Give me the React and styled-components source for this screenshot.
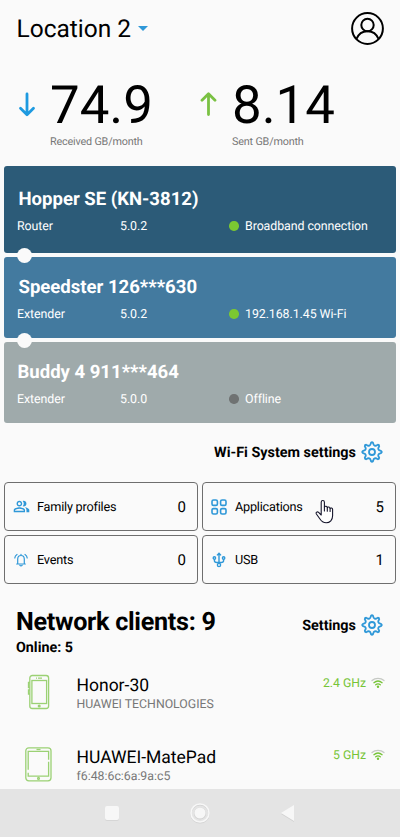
import React from 'react';
import styled, { createGlobalStyle } from 'styled-components';
import { MdOutlinePeopleAlt } from 'react-icons/md';

const GlobalStyle = createGlobalStyle`
  * {
    box-sizing: border-box;
  }
  body {
    margin: 0;
    background: #fafafa;
    color: #000;
    font-family: Roboto, "Liberation Sans", sans-serif;
    text-rendering: geometricPrecision;
    overflow: hidden;
  }
  svg {
    display: block;
    flex-shrink: 0;
  }
`;
const Screen = styled.div`
  display: flex;
  flex-direction: column;
  width: 400px;
  height: 837px;
  overflow: hidden;
`;
const Header = styled.header`
  display: flex;
  align-items: center;
  justify-content: space-between;
  height: 58px;
  padding: 0 16px 2px 16.5px;
`;
const LocationButton = styled.div`
  display: flex;
  align-items: center;
  gap: 7px;
  padding-top: 2px;
  font-size: 24.5px;
  line-height: 30px;
`;
const Stats = styled.section`
  display: flex;
  padding: 16px 0 0 18px;
`;
const Stat = styled.div`
  display: flex;
  width: 182px;
  gap: 14px;
  padding-top: 1px;
`;
const StatArrow = styled.div`
  padding-top: 17px;
`;
const StatValue = styled.div`
  font-size: 52.8px;
  line-height: 60px;
`;
const StatCaption = styled.div`
  font-size: 10.8px;
  line-height: 13px;
  letter-spacing: -0.18px;
  color: #777;
`;
const Devices = styled.section`
  display: flex;
  flex-direction: column;
  gap: 4px;
  margin: 18px 4px 0;
`;
const Device = styled.article`
  position: relative;
  height: ${(props) => props.$height}px;
  padding: ${(props) => props.$top}px 14px 0 13px;
  border-radius: 3px;
  background: ${(props) => props.$color};
  color: #fff;
`;
const DeviceName = styled.h2`
  margin: 0 0 8px;
  padding-left: ${(props) => props.$indent}px;
  font-size: 18.55px;
  font-weight: 700;
  line-height: 22px;
`;
const DeviceRow = styled.div`
  display: grid;
  grid-template-columns: 103px 109px 1fr;
  font-size: 12.4px;
  line-height: 18px;
  letter-spacing: -0.08px;
`;
const Status = styled.span`
  display: flex;
  align-items: center;
  gap: 6.5px;
`;
const Dot = styled.i`
  width: 9.5px;
  height: 9.5px;
  margin-bottom: 2px;
  border-radius: 50%;
  background: ${(props) => (props.$online ? '#7bc832' : '#6f7272')};
`;
const Joint = styled.i`
  position: absolute;
  z-index: 1;
  left: 13px;
  bottom: -10px;
  width: 15px;
  height: 15px;
  border-radius: 50%;
  background: #fafafa;
`;
const SettingsLink = styled.div`
  display: flex;
  align-items: center;
  justify-content: flex-end;
  gap: 5px;
  font-size: 14.4px;
  font-weight: 700;
  line-height: 22px;
`;
const LinkText = styled.span`
  padding-top: 2px;
`;
const SystemSettings = styled.div`
  height: 40px;
  padding: 17px 17px 0;
`;
const Tiles = styled.section`
  display: grid;
  grid-template-columns: 194px 194px;
  grid-auto-rows: 49px;
  gap: 4px;
  margin: 19px 4px 0;
`;
const Tile = styled.div`
  position: relative;
  display: flex;
  align-items: center;
  padding: 0 11px 0 7px;
  border: 1px solid #6e6e6e;
  border-radius: 4px;
`;
const TileIcon = styled.span`
  display: flex;
  justify-content: center;
  width: 18px;
  margin-right: 7px;
  color: #2f98d8;
`;
const TileLabel = styled.span`
  flex: 1;
  padding-top: 2px;
  font-size: 12.7px;
  letter-spacing: -0.22px;
`;
const TileCount = styled.span`
  font-size: 15px;
`;
const Pointer = styled.span`
  position: absolute;
  left: 112px;
  top: 16px;
`;
const ClientsHeader = styled.div`
  display: flex;
  align-items: center;
  justify-content: space-between;
  padding: 20px 17px 0 16px;
`;
const ClientsTitle = styled.h1`
  margin: 0;
  padding-top: 3px;
  font-size: 25.2px;
  font-weight: 700;
  line-height: 32px;
  letter-spacing: -0.3px;
`;
const ClientSettings = styled.div`
  padding-top: 6px;
`;
const Online = styled.div`
  padding: 0 16px;
  font-size: 14.3px;
  font-weight: 700;
  line-height: 18px;
`;
const Clients = styled.section`
  flex: 1;
  min-height: 0;
  padding-top: 17px;
  overflow: hidden;
`;
const Client = styled.div`
  display: flex;
  height: 72px;
  padding: 0 15px 0 24px;
`;
const ClientIcon = styled.div`
  width: 52.5px;
`;
const ClientInfo = styled.div`
  flex: 1;
  padding-top: 1px;
`;
const ClientName = styled.div`
  font-size: 17.5px;
  line-height: 22px;
`;
const ClientDetail = styled.div`
  font-size: 12.3px;
  line-height: 17px;
  color: #777;
`;
const Signal = styled.div`
  display: flex;
  gap: 5px;
  height: 18px;
  align-items: center;
  font-size: 12.2px;
  color: #76c437;
`;
const NavBar = styled.nav`
  display: flex;
  align-items: center;
  justify-content: space-between;
  height: 48px;
  padding: 0 104px;
  background: #e4e4e4;
`;

const point = (radius, degrees) => {
  const a = (degrees * Math.PI) / 180;
  return `${(11 + radius * Math.sin(a)).toFixed(2)} ${(11 - radius * Math.cos(a)).toFixed(2)}`;
};

// eight teeth with a round notch between each pair
const gearPath = Array.from({ length: 8 }, (_, i) => {
  const a = i * 45;
  return `${i ? 'L' : 'M'}${point(9.3, a - 6)} Q${point(10.2, a)} ${point(9.3, a + 6)} L${point(8.4, a + 9)} A2.2 2.2 0 0 0 ${point(8.4, a + 36)}`;
}).join(' ');

const GearIcon = () => (
  <svg width="22" height="22" viewBox="0 0 22 22" fill="none" stroke="#2f98d8" strokeWidth="1.8" strokeLinejoin="round">
    <path d={`${gearPath}Z`} />
    <circle cx="11" cy="11" r="3" />
  </svg>
);

const ProfileIcon = () => (
  <svg width="33" height="33" viewBox="0 0 33 33" fill="none" stroke="#000" strokeWidth="2">
    <circle cx="16.5" cy="16.5" r="15.4" />
    <circle cx="16.5" cy="13" r="6.2" />
    <path d="M5.4 27C7.4 22 11.5 19.2 16.5 19.2S25.6 22 27.6 27" />
  </svg>
);

const ArrowIcon = ({ up }) => (
  <svg width="18" height="26" viewBox="0 0 18 26" fill="none" stroke={up ? '#7ac143' : '#1e9ae0'} strokeWidth="2.8" strokeLinecap="round" strokeLinejoin="round">
    <path d={up ? 'M8.5 22.5V2M2 8.2l6.5-6.5L15 8.2' : 'M9 2V22.5M2.5 16.3L9 22.8l6.5-6.5'} />
  </svg>
);

const AppsIcon = () => (
  <svg width="16" height="16" viewBox="0 0 16 16" fill="none" stroke="currentColor" strokeWidth="1.6">
    <rect x="1" y="1" width="5.4" height="5.4" rx="1.5" />
    <rect x="9.6" y="1" width="5.4" height="5.4" rx="1.5" />
    <rect x="1" y="9.6" width="5.4" height="5.4" rx="1.5" />
    <rect x="9.6" y="9.6" width="5.4" height="5.4" rx="1.5" />
  </svg>
);

const BellIcon = () => (
  <svg width="14" height="14" viewBox="0 0 14 14" fill="none" stroke="currentColor" strokeWidth="1.2" strokeLinecap="round">
    <path d="M2.7 11h8.6M3.7 10.8V6.2C3.7 3.8 5 2.5 7 2.5s3.3 1.3 3.3 3.7v4.6M7 2.3V1.4M5.9 12.3c.5.7 1.7.7 2.2 0" />
    <path d="M3 1.5C1.6 2.3.9 3.6.8 5M11 1.5c1.4.8 2.1 2.1 2.2 3.5" />
  </svg>
);

const UsbIcon = () => (
  <svg width="14" height="16" viewBox="0 0 14 16" fill="none" stroke="currentColor" strokeWidth="1.4">
    <path d="M7 11.5V2M5 3.4L7 1.2l2 2.2M2.4 7.2v1.3c0 1.5 1 2 2.4 2h4.4c1.4 0 2.4-.5 2.4-2V7.2" />
    <circle cx="7" cy="13" r="1.6" />
    <circle cx="2.4" cy="6" r="1.2" />
    <circle cx="11.6" cy="6" r="1.2" />
  </svg>
);

const HandIcon = () => (
  <svg width="20" height="26" viewBox="0 0 20 26" fill="#fff" stroke="#15152b" strokeWidth="1.1" strokeLinejoin="round" strokeLinecap="round">
    <path d="M6.2 16V3.2c0-2.2 3.2-2.2 3.2 0V8c.6-1.2 2.8-.9 2.9.6.6-1 2.7-.7 2.8.8.8-.9 2.5-.4 2.5 1.2v6.2c0 4-2.6 7-6.4 7-3.5 0-4.8-1.4-6.4-4L1.4 15c-.9-1.6.9-2.8 2.2-1.6L6.2 16z" />
    <path d="M9.4 8v4M12.3 8.8v3.4M15.1 9.6v2.8" fill="none" />
  </svg>
);

const WifiIcon = () => (
  <svg width="14" height="12" viewBox="0 0 14 12" fill="none" strokeWidth="1.3" strokeLinecap="round">
    <path d="M1 3.5C4.3.6 9.7.6 13 3.5" stroke="#c6c9c4" />
    <path d="M2.9 5.7c2.4-2 5.8-2 8.2 0M4.7 7.8c1.4-1.1 3.2-1.1 4.6 0" stroke="#76c437" />
    <circle cx="7" cy="9.8" r="1.2" fill="#76c437" />
  </svg>
);

const PhoneIcon = () => (
  <svg width="30" height="36" viewBox="0 0 30 36" fill="none" stroke="#9bd174" strokeWidth="1.3">
    <rect x="5.8" y="1.5" width="18.8" height="33" rx="2.5" />
    <rect x="7.9" y="6.5" width="14.7" height="23" />
    <path d="M12 4.2h1M14 4.2h4M5.8 8.5H4.5v5h1.3M5.8 16H4.5v4h1.3" />
    <circle cx="15.2" cy="32" r="0.9" fill="#9bd174" />
  </svg>
);

const TabletIcon = () => (
  <svg width="30" height="36" viewBox="0 0 30 36" fill="none" stroke="#9bd174" strokeWidth="1.3">
    <rect x="1.8" y="1.8" width="25.2" height="33" rx="3" />
    <path d="M4.2 23.8V5.3h20.4v8.5M4.2 26.8v3.3h20.4V15.8" />
    <path d="M12.5 3.5h4" />
    <circle cx="14.5" cy="32.4" r="0.9" />
  </svg>
);

const devices = [
  { name: 'Hopper SE (KN-3812)', role: 'Router', version: '5.0.2', status: 'Broadband connection', online: true, color: '#2c5b78', height: 87, top: 22, indent: 1.5 },
  { name: 'Speedster 126***630', role: 'Extender', version: '5.0.2', status: '192.168.1.45 Wi-Fi', online: true, color: '#437a9f', height: 81, top: 19, indent: 1.5 },
  { name: 'Buddy 4 911***464', role: 'Extender', version: '5.0.0', status: 'Offline', online: false, color: '#9faaab', height: 81, top: 19, indent: 0.5 },
];

const tiles = [
  { label: 'Family profiles', count: 0, icon: <MdOutlinePeopleAlt size={17} /> },
  { label: 'Applications', count: 5, icon: <AppsIcon />, pointer: true },
  { label: 'Events', count: 0, icon: <BellIcon /> },
  { label: 'USB', count: 1, icon: <UsbIcon /> },
];

const clients = [
  { name: 'Honor-30', detail: 'HUAWEI TECHNOLOGIES', band: '2.4 GHz', icon: <PhoneIcon /> },
  { name: 'HUAWEI-MatePad', detail: 'f6:48:6c:6a:9a:c5', band: '5 GHz', icon: <TabletIcon /> },
];

const App = () => (
  <Screen>
    <GlobalStyle />
    <Header>
      <LocationButton>
        Location 2
        <svg width="10" height="6" viewBox="0 0 10 6">
          <path d="M0 0h10L5 5z" fill="#2f98d8" />
        </svg>
      </LocationButton>
      <ProfileIcon />
    </Header>
    <Stats>
      <Stat>
        <StatArrow><ArrowIcon /></StatArrow>
        <div>
          <StatValue>74.9</StatValue>
          <StatCaption>Received GB/month</StatCaption>
        </div>
      </Stat>
      <Stat>
        <StatArrow><ArrowIcon up /></StatArrow>
        <div>
          <StatValue>8.14</StatValue>
          <StatCaption>Sent GB/month</StatCaption>
        </div>
      </Stat>
    </Stats>
    <Devices>
      {devices.map((device, index) => (
        <Device key={device.name} $height={device.height} $top={device.top} $color={device.color}>
          <DeviceName $indent={device.indent}>{device.name}</DeviceName>
          <DeviceRow>
            <span>{device.role}</span>
            <span>{device.version}</span>
            <Status>
              <Dot $online={device.online} />
              {device.status}
            </Status>
          </DeviceRow>
          {index < devices.length - 1 && <Joint />}
        </Device>
      ))}
    </Devices>
    <SystemSettings>
      <SettingsLink>
        <LinkText>Wi-Fi System settings</LinkText>
        <GearIcon />
      </SettingsLink>
    </SystemSettings>
    <Tiles>
      {tiles.map((tile) => (
        <Tile key={tile.label}>
          <TileIcon>{tile.icon}</TileIcon>
          <TileLabel>{tile.label}</TileLabel>
          <TileCount>{tile.count}</TileCount>
          {tile.pointer && <Pointer><HandIcon /></Pointer>}
        </Tile>
      ))}
    </Tiles>
    <ClientsHeader>
      <ClientsTitle>Network clients: 9</ClientsTitle>
      <ClientSettings>
        <SettingsLink>
          <LinkText>Settings</LinkText>
          <GearIcon />
        </SettingsLink>
      </ClientSettings>
    </ClientsHeader>
    <Online>Online: 5</Online>
    <Clients>
      {clients.map((client) => (
        <Client key={client.name}>
          <ClientIcon>{client.icon}</ClientIcon>
          <ClientInfo>
            <ClientName>{client.name}</ClientName>
            <ClientDetail>{client.detail}</ClientDetail>
          </ClientInfo>
          <Signal>
            {client.band}
            <WifiIcon />
          </Signal>
        </Client>
      ))}
    </Clients>
    <NavBar>
      <svg width="16" height="16" viewBox="0 0 16 16">
        <rect x="1" y="2" width="14" height="14" rx="2" fill="#d6d6d6" />
        <rect x="1" y="1" width="14" height="14" rx="2" fill="#f7f7f7" />
      </svg>
      <svg width="22" height="22" viewBox="0 0 22 22">
        <circle cx="11" cy="11.8" r="9" fill="none" stroke="#d2d2d2" strokeWidth="1.6" />
        <circle cx="11" cy="11" r="9" fill="none" stroke="#f7f7f7" strokeWidth="1.6" />
        <circle cx="11" cy="11.6" r="6" fill="#d0d0d0" />
        <circle cx="11" cy="11" r="5.6" fill="#f7f7f7" />
      </svg>
      <svg width="16" height="20" viewBox="0 0 16 20">
        <path d="M14 3v16L1 11z" fill="#d2d2d2" />
        <path d="M14 2v16L1 10z" fill="#f7f7f7" />
      </svg>
    </NavBar>
  </Screen>
);

export default App;
